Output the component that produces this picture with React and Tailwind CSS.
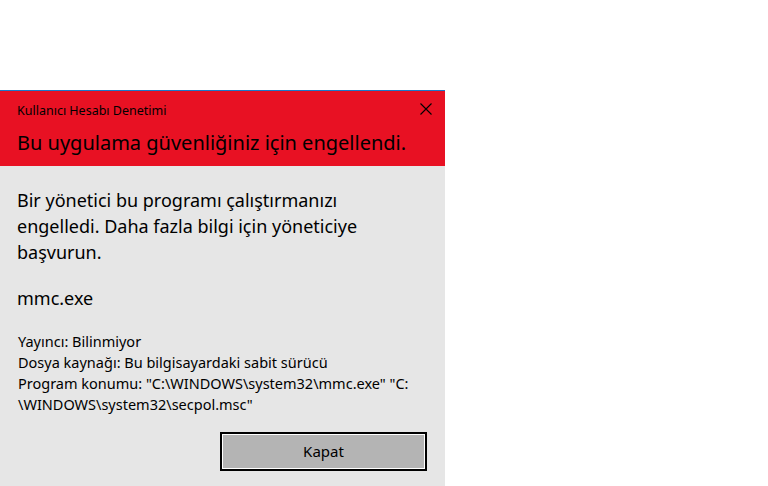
import React from "react";

const App = () => {
  return (
    <div className="w-[768px] h-[486px] bg-white overflow-hidden" style={{ fontFamily: '"Noto Sans", "Open Sans", sans-serif' }}>
      <div className="h-[90px]" />
      <div className="w-[445px] h-[396px] flex flex-col bg-[#e6e6e6]">
        <div className="h-px bg-[#1a78c8]" />
        <div className="h-[75px] bg-[#e81123] pl-[17px] pr-[12px] flex flex-col text-black">
          <div className="flex items-start justify-between pt-[12px]">
            <span className="text-[12.5px] leading-[16px]">Kullanıcı Hesabı Denetimi</span>
            <svg width="12" height="12" viewBox="0 0 12 12" className="mr-px">
              <path d="M0.5 0.5L11.5 11.5M11.5 0.5L0.5 11.5" stroke="#000" strokeWidth="1.1" />
            </svg>
          </div>
          <div className="text-[20px] leading-[28px] mt-[10px]">Bu uygulama güvenliğiniz için engellendi.</div>
        </div>
        <div className="flex flex-col pl-[17px] pr-[12px] text-black">
          <div className="text-[18px] leading-[26px] mt-[21px]">
            Bir yönetici bu programı çalıştırmanızı
            <br />
            engelledi. Daha fazla bilgi için yöneticiye
            <br />
            başvurun.
          </div>
          <div className="text-[18px] leading-[26px] mt-[20px]">mmc.exe</div>
          <div className="text-[14.5px] leading-[21px] mt-[20px] pl-px">
            <div>Yayıncı: Bilinmiyor</div>
            <div>Dosya kaynağı: Bu bilgisayardaki sabit sürücü</div>
            <div>Program konumu: "C:\WINDOWS\system32\mmc.exe" "C:</div>
            <div>\WINDOWS\system32\secpol.msc"</div>
          </div>
          <div className="flex justify-end mt-[17px] pr-[6px]">
            <button className="w-[207px] h-[39px] border-2 border-black bg-[#b4b4b4] outline outline-1 outline-white -outline-offset-[3px] text-[15px] text-black">
              Kapat
            </button>
          </div>
        </div>
      </div>
    </div>
  );
};

export default App;
